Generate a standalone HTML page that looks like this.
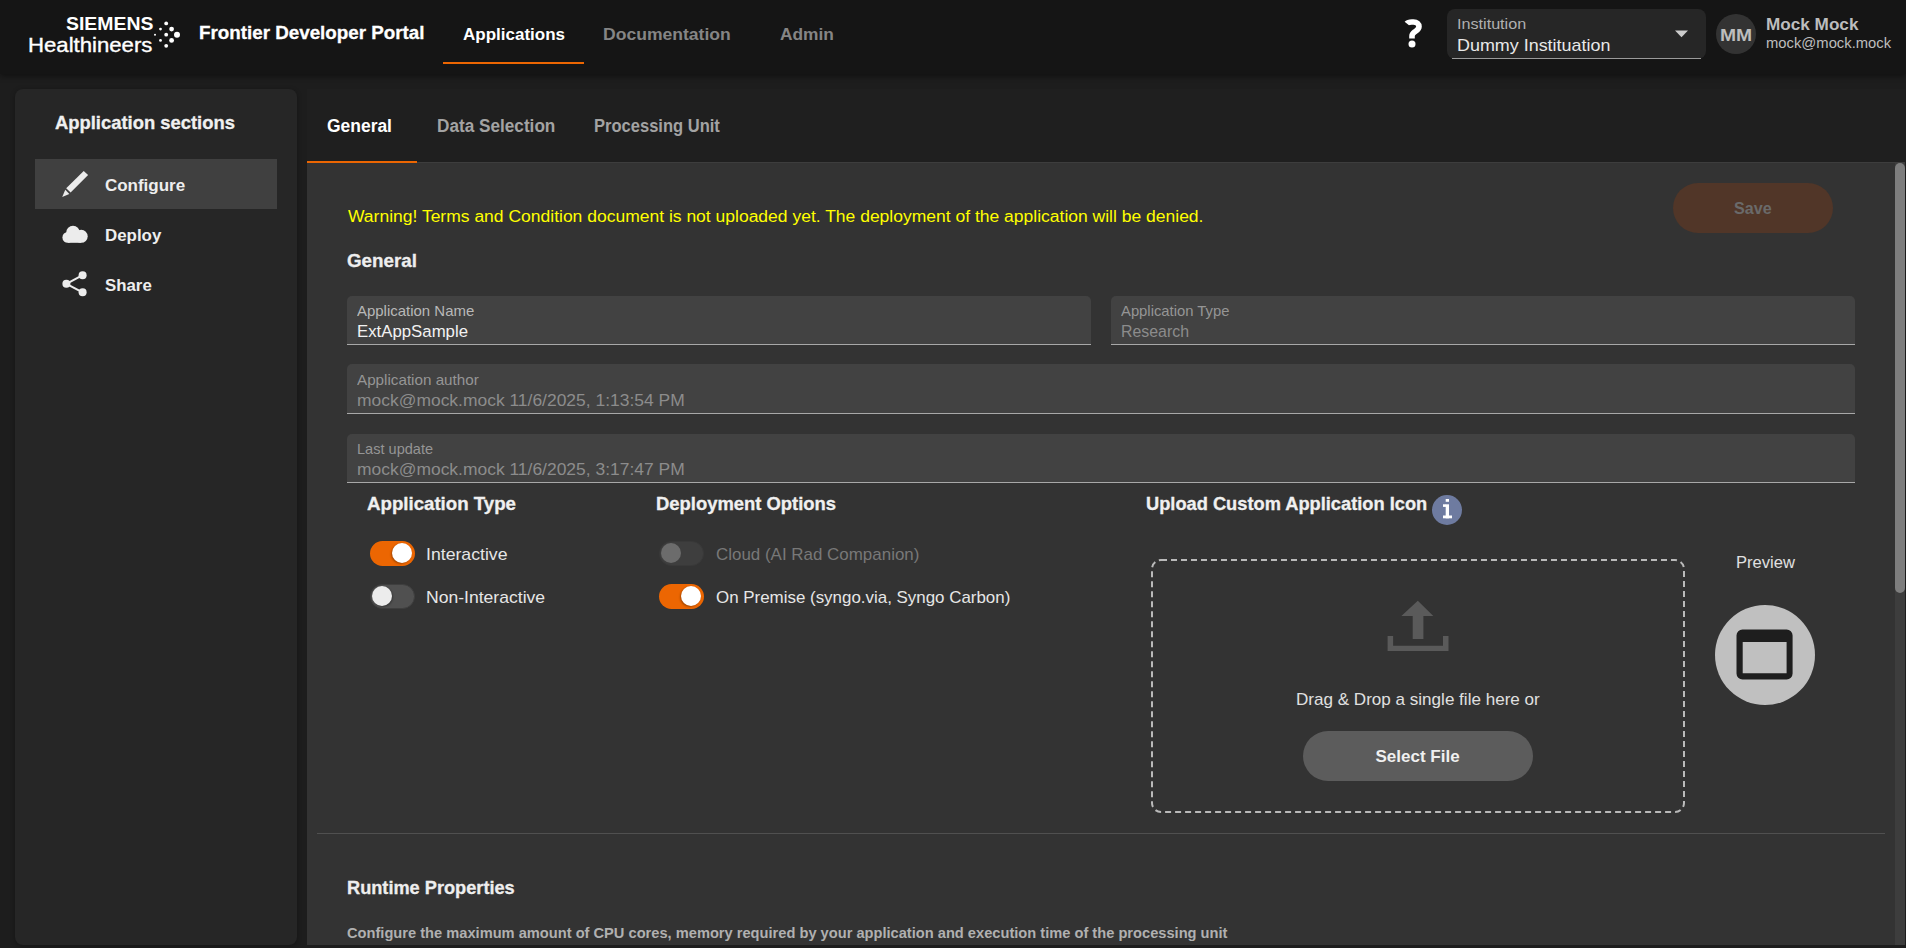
<!DOCTYPE html>
<html><head><meta charset="utf-8"><title>Frontier Developer Portal</title>
<style>
html,body{margin:0;padding:0;width:1906px;height:948px;overflow:hidden;background:#1d1d1d;font-family:"Liberation Sans",sans-serif;}
.a{position:absolute;box-sizing:border-box;}
.t{position:absolute;white-space:nowrap;line-height:1;transform-origin:0 0;z-index:5;}
</style></head><body>
<div class="a" style="left:0;top:0;width:1906px;height:74px;background:#151515;box-shadow:0 2px 6px rgba(0,0,0,0.45);z-index:1"></div>
<div class="a" style="left:443px;top:62px;width:141px;height:2px;background:#ec6602;z-index:2"></div>
<div class="a" style="left:1447px;top:9px;width:259px;height:50px;border-radius:8px;background:#262626;z-index:2"></div>
<div class="a" style="left:1452px;top:58px;width:249px;height:1px;background:#9a9a9a;z-index:2"></div>
<div class="a" style="left:1716px;top:14px;width:40px;height:40px;border-radius:50%;background:#333333;z-index:2"></div>
<div class="a" style="left:15px;top:89px;width:282px;height:856px;border-radius:8px;background:#262626;box-shadow:0 1px 5px rgba(0,0,0,0.3)"></div>
<div class="a" style="left:35px;top:159px;width:242px;height:50px;background:#404040"></div>
<div class="a" style="left:307px;top:89px;width:1598px;height:73px;background:#1f1f1f"></div>
<div class="a" style="left:307px;top:162px;width:1598px;height:783px;background:#333333;border-top:1px solid #3d3d3d"></div>
<div class="a" style="left:307px;top:161px;width:110px;height:2px;background:#ec6602"></div>
<div class="a" style="left:1895px;top:163px;width:10px;height:782px;background:#3d3d3d"></div>
<div class="a" style="left:1895px;top:163px;width:10px;height:430px;border-radius:5px;background:#7e7e7e"></div>
<div class="a" style="left:1673px;top:183px;width:160px;height:50px;border-radius:25px;background:#513628"></div>
<div class="a" style="left:347px;top:296px;width:744px;height:49px;border-radius:5px 5px 0 0;background:#424242;border-bottom:1px solid #a8a8a8"></div>
<div class="a" style="left:1111px;top:296px;width:744px;height:49px;border-radius:5px 5px 0 0;background:#424242;border-bottom:1px solid #a8a8a8"></div>
<div class="a" style="left:347px;top:364px;width:1508px;height:50px;border-radius:5px 5px 0 0;background:#424242;border-bottom:1px solid #a8a8a8"></div>
<div class="a" style="left:347px;top:434px;width:1508px;height:49px;border-radius:5px 5px 0 0;background:#424242;border-bottom:1px solid #a8a8a8"></div>
<!-- toggles -->
<div class="a" style="left:370px;top:541px;width:45px;height:25px;border-radius:13px;background:#ec6602"></div>
<div class="a" style="left:392px;top:543px;width:20px;height:20px;border-radius:50%;background:#ffffff;box-shadow:-1px 1px 2px rgba(0,0,0,.3)"></div>
<div class="a" style="left:370px;top:584px;width:45px;height:25px;border-radius:13px;background:#505050;border:1px solid #3e3e3e"></div>
<div class="a" style="left:372px;top:586px;width:20px;height:20px;border-radius:50%;background:#ececec;box-shadow:1px 1px 2px rgba(0,0,0,.3)"></div>
<div class="a" style="left:659px;top:541px;width:45px;height:25px;border-radius:13px;background:#3e3e3e;border:1px solid #393939"></div>
<div class="a" style="left:661px;top:543px;width:20px;height:20px;border-radius:50%;background:#6c6c6c"></div>
<div class="a" style="left:659px;top:584px;width:45px;height:25px;border-radius:13px;background:#ec6602"></div>
<div class="a" style="left:681px;top:586px;width:20px;height:20px;border-radius:50%;background:#ffffff;box-shadow:-1px 1px 2px rgba(0,0,0,.3)"></div>
<!-- info -->
<div class="a" style="left:1432px;top:494.5px;width:30px;height:30px;border-radius:50%;background:#6e7ba0"></div>
<!-- dashed box -->

<div class="a" style="left:1303px;top:731px;width:230px;height:50px;border-radius:25px;background:#5c5c5c"></div>
<div class="a" style="left:1715px;top:605px;width:100px;height:100px;border-radius:50%;background:#c0c0c0"></div>
<div class="a" style="left:317px;top:833px;width:1568px;height:1px;background:#505050"></div>
<svg class="a" style="left:0;top:0;z-index:3" width="1906" height="948" viewBox="0 0 1906 948">
 <g fill="#ffffff">
  <circle cx="166.2" cy="23.4" r="1.9"/><circle cx="160.5" cy="29.1" r="1.4"/><circle cx="171.6" cy="29.1" r="2.4"/>
  <circle cx="155" cy="34.7" r="1"/><circle cx="166.2" cy="34.7" r="1.9"/><circle cx="177" cy="34.7" r="3"/>
  <circle cx="160.5" cy="40.4" r="1.4"/><circle cx="171.6" cy="40.4" r="2.4"/><circle cx="166.2" cy="45.8" r="1.9"/>
 </g>
 <polygon points="1675,30.5 1688,30.5 1681.5,37.3" fill="#cccccc"/>
 <path d="M1406.8 23.6 C1408.4 21.6 1410.5 22 1413.5 22 C1417 22 1419 24 1419 26.5 C1419 29.5 1416.5 30.5 1414.5 32 C1412.5 33.5 1412 34.5 1412 36 V38.5" stroke="#ffffff" stroke-width="5.6" fill="none"/>
 <circle cx="1412" cy="44" r="3.5" fill="#ffffff"/>
 <g fill="#ececec">
  <polygon points="83.7,170.9 88.1,175.1 70.6,192.4 66.2,188.2"/>
  <polygon points="65.3,189.7 69.3,193.9 62.2,196.9"/>
  <circle cx="73" cy="232.6" r="6.8"/><circle cx="81.2" cy="236.3" r="6.5"/><circle cx="67.8" cy="237.4" r="5.4"/><rect x="67.8" y="235" width="13.4" height="7.8"/>
  <circle cx="82.6" cy="275.2" r="4"/><circle cx="66.4" cy="283.8" r="4"/><circle cx="82.6" cy="292.3" r="4"/>
 </g>
 <g stroke="#ececec" stroke-width="2" fill="none">
  <line x1="66.4" y1="283.8" x2="82.6" y2="275.2"/><line x1="66.4" y1="283.8" x2="82.6" y2="292.3"/>
 </g>
 <g fill="#ffffff">
  <rect x="1445.7" y="499" width="3.3" height="2.8"/>
  <rect x="1445.7" y="504.3" width="3.3" height="14"/>
  <rect x="1443" y="504.3" width="3" height="2.6"/>
  <rect x="1443" y="515.5" width="9" height="2.8"/>
 </g>
 <path d="M1161 560 H1675 A9 9 0 0 1 1684 569 V803 A9 9 0 0 1 1675 812 H1161 A9 9 0 0 1 1152 803 V569 A9 9 0 0 1 1161 560 Z" fill="none" stroke="#bababa" stroke-width="2" stroke-dasharray="6 4"/>
 <g fill="#5a5a5a">
  <polygon points="1417.8,600.7 1433.3,615.9 1423.4,615.9 1423.4,638.9 1412.7,638.9 1412.7,615.9 1401.4,615.9"/>
  <path d="M1387.6 635.9h5.5v9.8h49.9v-9.8h5.5v15h-60.9z"/>
 </g>
 <path fill="#1e1e1e" fill-rule="evenodd" d="M1742.5 629.6h44.1a6 6 0 0 1 6 6v37.9a6 6 0 0 1 -6 6h-44.1a6 6 0 0 1 -6 -6v-37.9a6 6 0 0 1 6 -6z M1742.7 642v31.3h43.9v-31.3z"/>
</svg>

<div class="t" style="left:65.64px;top:15.02px;font-size:18.4px;font-weight:700;color:#ffffff;transform:scaleX(1.0556);">SIEMENS</div>
<div class="t" style="left:28.31px;top:35.01px;font-size:20.4px;font-weight:400;color:#ffffff;transform:scaleX(1.0867);-webkit-text-stroke:0.35px #ffffff;">Healthineers</div>
<div class="t" style="left:198.97px;top:24.01px;font-size:18.3px;font-weight:700;color:#ffffff;transform:scaleX(1.0276);-webkit-text-stroke:0.3px #ffffff;">Frontier Developer Portal</div>
<div class="t" style="left:463.00px;top:26.00px;font-size:17px;font-weight:700;color:#ffffff;">Applications</div>
<div class="t" style="left:602.97px;top:26.00px;font-size:17px;font-weight:700;color:#858585;transform:scaleX(1.0328);">Documentation</div>
<div class="t" style="left:780.00px;top:26.00px;font-size:17px;font-weight:700;color:#858585;transform:scaleX(1.0192);">Admin</div>
<div class="t" style="left:1457.12px;top:16.01px;font-size:15px;font-weight:400;color:#b0b0b0;transform:scaleX(1.0774);">Institution</div>
<div class="t" style="left:1457.15px;top:37.01px;font-size:17px;font-weight:400;color:#e8e8e8;transform:scaleX(1.0542);">Dummy Instituation</div>
<div class="t" style="left:1719.83px;top:27.01px;font-size:16.5px;font-weight:700;color:#bdbdbd;transform:scaleX(1.1731);">MM</div>
<div class="t" style="left:1765.69px;top:16.01px;font-size:17px;font-weight:700;color:#bdbdbd;transform:scaleX(1.0088);">Mock Mock</div>
<div class="t" style="left:1765.69px;top:36.00px;font-size:14.7px;font-weight:400;color:#bdbdbd;transform:scaleX(1.0065);">mock@mock.mock</div>
<div class="t" style="left:55.20px;top:114.01px;font-size:18.5px;font-weight:700;color:#f0f0f0;transform:scaleX(0.9944);-webkit-text-stroke:0.3px #f0f0f0;">Application sections</div>
<div class="t" style="left:104.90px;top:177.01px;font-size:17px;font-weight:700;color:#eeeeee;">Configure</div>
<div class="t" style="left:104.91px;top:227.00px;font-size:17px;font-weight:700;color:#eeeeee;transform:scaleX(0.9929);">Deploy</div>
<div class="t" style="left:104.91px;top:277.01px;font-size:17px;font-weight:700;color:#eeeeee;transform:scaleX(0.9891);">Share</div>
<div class="t" style="left:326.80px;top:118.00px;font-size:17.5px;font-weight:700;color:#ffffff;transform:scaleX(0.9969);">General</div>
<div class="t" style="left:436.82px;top:118.00px;font-size:17.5px;font-weight:700;color:#a3a3a3;transform:scaleX(0.9815);">Data Selection</div>
<div class="t" style="left:594.36px;top:118.00px;font-size:17.5px;font-weight:700;color:#a3a3a3;transform:scaleX(0.9447);">Processing Unit</div>
<div class="t" style="left:347.60px;top:208.00px;font-size:17.3px;font-weight:400;color:#ffff00;transform:scaleX(1.0123);">Warning! Terms and Condition document is not uploaded yet. The deployment of the application will be denied.</div>
<div class="t" style="left:1733.80px;top:200.01px;font-size:16.5px;font-weight:700;color:#6a6a6a;transform:scaleX(0.9763);">Save</div>
<div class="t" style="left:346.99px;top:252.01px;font-size:18.5px;font-weight:700;color:#eeeeee;transform:scaleX(1.0149);-webkit-text-stroke:0.3px #eeeeee;">General</div>
<div class="t" style="left:357.30px;top:303.01px;font-size:15px;font-weight:400;color:#b8b8b8;transform:scaleX(0.9974);">Application Name</div>
<div class="t" style="left:357.00px;top:324.01px;font-size:16.8px;font-weight:400;color:#f2f2f2;">ExtAppSample</div>
<div class="t" style="left:1121.00px;top:303.00px;font-size:15px;font-weight:400;color:#959595;transform:scaleX(0.9873);">Application Type</div>
<div class="t" style="left:1120.75px;top:324.01px;font-size:16.8px;font-weight:400;color:#8c8c8c;transform:scaleX(0.9471);">Research</div>
<div class="t" style="left:357.30px;top:372.01px;font-size:15px;font-weight:400;color:#959595;transform:scaleX(1.0142);">Application author</div>
<div class="t" style="left:356.96px;top:393.01px;font-size:16.8px;font-weight:400;color:#8c8c8c;transform:scaleX(1.0396);">mock@mock.mock 11/6/2025, 1:13:54 PM</div>
<div class="t" style="left:357.13px;top:441.00px;font-size:15px;font-weight:400;color:#959595;transform:scaleX(0.9701);">Last update</div>
<div class="t" style="left:356.96px;top:462.01px;font-size:16.8px;font-weight:400;color:#8c8c8c;transform:scaleX(1.0396);">mock@mock.mock 11/6/2025, 3:17:47 PM</div>
<div class="t" style="left:367.10px;top:495.01px;font-size:18.5px;font-weight:700;color:#f0f0f0;transform:scaleX(1.0088);-webkit-text-stroke:0.3px #f0f0f0;">Application Type</div>
<div class="t" style="left:656.00px;top:495.01px;font-size:18.5px;font-weight:700;color:#f0f0f0;transform:scaleX(0.9955);-webkit-text-stroke:0.3px #f0f0f0;">Deployment Options</div>
<div class="t" style="left:426.46px;top:546.01px;font-size:17px;font-weight:400;color:#e6e6e6;transform:scaleX(1.0390);">Interactive</div>
<div class="t" style="left:426.47px;top:589.00px;font-size:17px;font-weight:400;color:#e6e6e6;transform:scaleX(1.0333);">Non-Interactive</div>
<div class="t" style="left:715.80px;top:546.01px;font-size:17px;font-weight:400;color:#787878;transform:scaleX(0.9965);">Cloud (AI Rad Companion)</div>
<div class="t" style="left:716.30px;top:589.00px;font-size:17px;font-weight:400;color:#e6e6e6;transform:scaleX(0.9952);">On Premise (syngo.via, Syngo Carbon)</div>
<div class="t" style="left:1146.01px;top:495.01px;font-size:18.5px;font-weight:700;color:#f0f0f0;transform:scaleX(0.9866);-webkit-text-stroke:0.3px #f0f0f0;">Upload Custom Application Icon</div>
<div class="t" style="left:1735.53px;top:554.00px;font-size:17px;font-weight:400;color:#e0e0e0;transform:scaleX(0.9750);">Preview</div>
<div class="t" style="left:1295.50px;top:691.01px;font-size:17px;font-weight:400;color:#e0e0e0;transform:scaleX(1.0037);">Drag &amp; Drop a single file here or</div>
<div class="t" style="left:1375.50px;top:748.00px;font-size:17px;font-weight:700;color:#f0f0f0;">Select File</div>
<div class="t" style="left:346.82px;top:879.00px;font-size:18.5px;font-weight:700;color:#eeeeee;transform:scaleX(0.9828);-webkit-text-stroke:0.3px #eeeeee;">Runtime Properties</div>
<div class="t" style="left:347.00px;top:925.01px;font-size:15px;font-weight:700;color:#b0b0b0;transform:scaleX(0.9763);">Configure the maximum amount of CPU cores, memory required by your application and execution time of the processing unit</div>
</body></html>
